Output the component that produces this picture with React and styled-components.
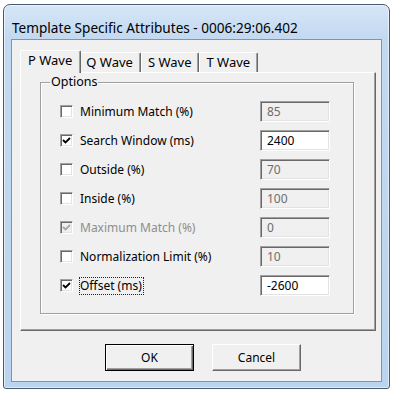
import React from 'react';
import styled, { createGlobalStyle } from 'styled-components';

const GlobalStyle = createGlobalStyle`
  html, body {
    margin: 0;
    padding: 0;
    background: #ffffff;
  }
  body {
    font-family: "Noto Sans", "Open Sans", sans-serif;
    font-size: 12px;
    color: #000;
  }
`;

const Window = styled.div`
  box-sizing: border-box;
  margin: 4px 0 0 3px;
  width: 387px;
  height: 385px;
  display: flex;
  flex-direction: column;
  border: 1px solid #4a5a6d;
  border-radius: 7px 7px 3px 3px;
  padding: 0 7px 6px 7px;
  background: linear-gradient(#d6e6f7, #c2d9f1 34px, #bad4ef);
  box-shadow: inset 0 0 0 1px rgba(255, 255, 255, 0.55);
`;

const TitleBar = styled.div`
  height: 34px;
  display: flex;
  align-items: center;
  padding: 11px 0 0 1px;
  box-sizing: border-box;
  font-size: 13.6px;
  color: #000;
`;

const Client = styled.div`
  flex: 1;
  display: flex;
  flex-direction: column;
  border: 1px solid #8394a8;
  background: #f0f0f0;
  padding: 10px 6px 0 8px;
`;

const TabStrip = styled.div`
  display: flex;
  align-items: flex-end;
  height: 22px;
  padding-left: 2px;
`;

const Tab = styled.div`
  box-sizing: border-box;
  display: flex;
  align-items: center;
  font-size: 13px;
  height: ${p => (p.$active ? '23px' : '20px')};
  margin: ${p => (p.$active ? '0 -2px -1px -2px' : '0')};
  padding: ${p => (p.$active ? '0 8px 4px 7px' : '0 7px 2px 6px')};
  position: relative;
  z-index: ${p => (p.$active ? 1 : 0)};
  background: #f0f0f0;
  border-top: 1px solid #fff;
  border-left: 1px solid #fff;
  border-right: 1px solid #696969;
  border-radius: 2px 2px 0 0;
  box-shadow: inset -1px 0 0 #a0a0a0;
  white-space: nowrap;
`;

const TabPanel = styled.div`
  box-sizing: border-box;
  width: 356px;
  height: 259px;
  border-top: 1px solid #fff;
  border-left: 1px solid #fff;
  border-right: 1px solid #696969;
  border-bottom: 1px solid #696969;
  box-shadow: inset -1px -1px 0 #a0a0a0;
  padding: 9px 21px 0 19px;
`;

const GroupBox = styled.div`
  position: relative;
  box-sizing: border-box;
  height: 232px;
  border: 1px solid #a0a0a0;
  box-shadow: inset 1px 1px 0 #fff, 1px 1px 0 #fff;
  padding: 18px 23px 0 19px;
`;

const Legend = styled.span`
  position: absolute;
  top: -9px;
  left: 9px;
  padding: 0 1px;
  line-height: 16px;
  font-size: 12.5px;
  background: #f0f0f0;
`;

const Grid = styled.div`
  display: grid;
  grid-template-columns: 13px 1fr 70px;
  grid-auto-rows: 21px;
  column-gap: 7px;
  row-gap: 8px;
  align-items: center;
`;

const Box = styled.div`
  box-sizing: border-box;
  width: 13px;
  height: 13px;
  border: 1px solid;
  border-color: #a0a0a0 #fff #fff #a0a0a0;
  box-shadow: inset 1px 1px 0 #696969, inset -1px -1px 0 #e3e3e3;
  background: ${p => (p.$disabled ? '#f0f0f0' : '#fff')};
  display: flex;
  align-items: center;
  justify-content: center;
`;

const Label = styled.span`
  justify-self: start;
  margin-left: -1px;
  padding: 0 1px 0 0;
  line-height: 16px;
  border: 1px dotted ${p => (p.$focus ? '#222' : 'transparent')};
  color: ${p => (p.$disabled ? '#8e8e8e' : '#000')};
  white-space: nowrap;
`;

const Field = styled.div`
  box-sizing: border-box;
  height: 21px;
  border: 1px solid;
  border-color: #a0a0a0 #fff #fff #a0a0a0;
  box-shadow: inset 1px 1px 0 #696969, inset -1px -1px 0 #e3e3e3;
  background: ${p => (p.$disabled ? '#f0f0f0' : '#fff')};
  color: ${p => (p.$disabled ? '#6d6d6d' : '#000')};
  padding: 0 5px 0 6px;
  display: flex;
  align-items: center;
`;

const ButtonRow = styled.div`
  display: flex;
  gap: 18px;
  margin: 13px 0 0 85px;
`;

const Button = styled.div`
  box-sizing: border-box;
  width: 89px;
  height: 27px;
  display: flex;
  align-items: center;
  justify-content: center;
  background: #f0f0f0;
  border: 1px solid;
  border-color: ${p => (p.$default ? '#000' : '#fff #696969 #696969 #fff')};
  box-shadow: ${p =>
    p.$default
      ? 'inset 1px 1px 0 #fff, inset -1px -1px 0 #696969, inset -2px -2px 0 #a0a0a0'
      : 'inset -1px -1px 0 #a0a0a0'};
`;

const Check = ({ color }) => (
  <svg width="9" height="9" viewBox="0 0 9 9">
    <path d="M1 4 L3.5 6.5 L8 2" fill="none" stroke={color} strokeWidth="1.8" />
  </svg>
);

const options = [
  { label: 'Minimum Match (%)', value: '85', checked: false, fieldOff: true },
  { label: 'Search Window (ms)', value: '2400', checked: true, fieldOff: false },
  { label: 'Outside (%)', value: '70', checked: false, fieldOff: true },
  { label: 'Inside (%)', value: '100', checked: false, fieldOff: true },
  { label: 'Maximum Match (%)', value: '0', checked: true, fieldOff: true, disabled: true },
  { label: 'Normalization Limit (%)', value: '10', checked: false, fieldOff: true },
  { label: 'Offset (ms)', value: '-2600', checked: true, fieldOff: false, focus: true },
];

export default function App() {
  return (
    <>
      <GlobalStyle />
      <Window>
        <TitleBar>Template Specific Attributes - 0006:29:06.402</TitleBar>
        <Client>
          <TabStrip>
            <Tab $active>P Wave</Tab>
            <Tab>Q Wave</Tab>
            <Tab>S Wave</Tab>
            <Tab>T Wave</Tab>
          </TabStrip>
          <TabPanel>
            <GroupBox>
              <Legend>Options</Legend>
              <Grid>
                {options.map(o => (
                  <React.Fragment key={o.label}>
                    <Box $disabled={o.disabled}>
                      {o.checked && <Check color={o.disabled ? '#a6a6a6' : '#000'} />}
                    </Box>
                    <Label $disabled={o.disabled} $focus={o.focus}>{o.label}</Label>
                    <Field $disabled={o.fieldOff}>{o.value}</Field>
                  </React.Fragment>
                ))}
              </Grid>
            </GroupBox>
          </TabPanel>
          <ButtonRow>
            <Button $default>OK</Button>
            <Button>Cancel</Button>
          </ButtonRow>
        </Client>
      </Window>
    </>
  );
}
